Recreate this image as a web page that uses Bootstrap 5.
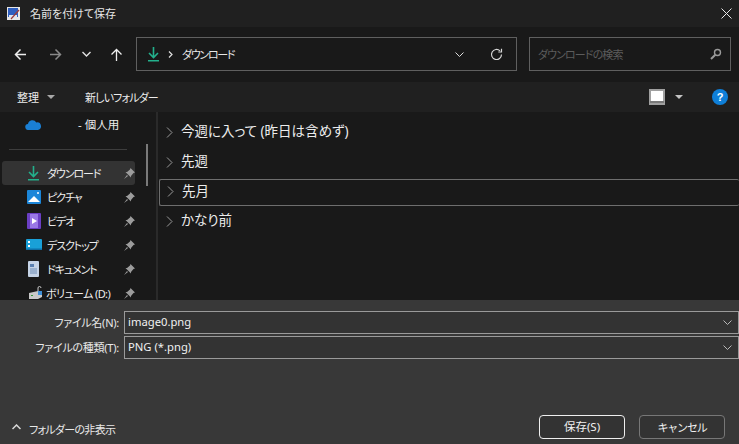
<!DOCTYPE html>
<html lang="ja">
<head>
<meta charset="utf-8">
<title>名前を付けて保存</title>
<link href="https://cdn.jsdelivr.net/npm/bootstrap@5.3.0/dist/css/bootstrap.min.css" rel="stylesheet">
<style>
html,body{height:444px;overflow:hidden;background:#383838}
body{font-family:"Noto Sans","Noto Sans CJK JP",sans-serif;color:#f2f2f2;font-size:12px;line-height:1;font-feature-settings:"palt"}
.win{width:739px;height:444px}
.titlebar{height:27px;background:#202020;padding-left:7px;font-size:11px}
.titlebar .ttl{margin-left:10px;color:#e8e8e8}
.closex{margin-left:auto;margin-right:7px}
.navrow{height:55px;background:#191919;padding:10px 9px 0 0;align-items:flex-start}
.navbtns{width:136px;height:34px;flex:none}
.addr{width:381px;height:34px;border:1px solid #5f5f5f;flex:none;padding-left:10px}
.addr .crumb{margin-left:9px;color:#e6e6e6;font-size:11px;letter-spacing:-1.3px}
.srch{width:202px;height:34px;border:1px solid #5f5f5f;margin-left:12px;flex:none;padding:0 8px;color:#5c5c5c;font-size:11px;letter-spacing:-.9px}
.cmdrow{height:30px;background:#202020;padding-left:17px;font-size:11px;color:#ececec}
.cmdrow .newf{margin-left:30px;letter-spacing:-.85px}
.cmdright{margin-left:auto;padding-right:11px}
.body-area{height:188px;background:#191919}
.sidebar{width:158px;flex:none;overflow:hidden;position:relative;border-right:2px solid #2a2a2a}
.sbar{position:absolute;left:146px;top:32px;width:2px;height:42px;background:#7a7a7a}
.srow{height:24px;margin:0 21px 0 2px;padding-left:25px;border-radius:3px;font-size:11px;flex:none;color:#ededed}
.srow .lbl{margin-left:7px;white-space:nowrap;letter-spacing:-1.1px}
.srow .pin{margin-left:auto;margin-right:0}
.srow.sel{background:#333}
.sepline{height:1px;flex:none;background:#3d3d3d;margin:10px 29px 11px 9px}
.onerow{height:27px;flex:none;padding:0 0 2px 25px;font-size:11.5px;color:#ededed}
.onerow .lbl{margin-left:37px}
.files{flex:1;min-width:0;padding-top:5px}
.grp{height:30px;padding-left:8px;font-size:13.5px;color:#ececec}
.grp .gname{margin-left:8px}
.grp.foc{border:1px solid #6e6e6e;border-right:0;border-radius:2px;height:27px;margin:2px 0 0 1px;padding:0 0 2px 7px}
.bottom{height:144px;background:#383838;padding-top:11px;position:relative}
.frow{height:22px;margin-bottom:3px;font-size:11px}
.frow label{width:119px;text-align:right;color:#e8e8e8;margin:0;letter-spacing:-.25px}
.fbox{margin-left:5px;width:615px;flex:none;height:23px;border:1px solid #9a9a9a;padding:0 3px;background:#333;color:#f0f0f0;font-size:11.25px}
.fbox svg{margin-left:auto;margin-right:3px}
.footrow{margin-top:57px;height:24px;padding-left:12px;padding-right:14px;font-size:11px;color:#e8e8e8}
.footrow .hide{margin-left:8px;margin-top:9px;letter-spacing:-.7px}
.foldup{margin-top:9px}
.dlgbtn{width:86px;height:24px;padding:0;border-radius:4px;background:#333;border:1px solid #777;color:#f0f0f0;font-size:11.5px;line-height:1}
.dlgbtn.kn{font-size:11px;letter-spacing:-1.2px}
.dlgbtn.pri{border:1px solid #efefef;margin-left:auto;margin-right:14px}
.dlgbtn:hover{background:#333;color:#f0f0f0}
</style>
</head>
<body>
<div class="win d-flex flex-column">
  <div class="titlebar d-flex align-items-center">
    <svg width="13" height="13" viewBox="0 0 13 13"><rect width="13" height="13" fill="#e8e8e8"/><rect x="1" y="1" width="10" height="9" fill="#2f5fc0"/><rect x="2" y="8" width="8" height="3" fill="#dfe6f2"/><path d="M4 12 12 3" stroke="#9c3a3a" stroke-width="1.2"/></svg>
    <span class="ttl">名前を付けて保存</span>
    <svg class="closex" width="11" height="11" viewBox="0 0 11 11"><path d="M.5.5l10 10M10.500.5l-10 10" stroke="#e8e8e8" stroke-width="1"/></svg>
  </div>
  <div class="navrow d-flex">
    <div class="navbtns d-flex align-items-center">
      <svg style="margin-left:14px" width="13" height="13" viewBox="0 0 13 13"><path d="M12 6.500H1.500M6.500 1.500l-5 5 5 5" fill="none" stroke="#eee" stroke-width="1.5"/></svg>
      <svg style="margin-left:22px" width="13" height="13" viewBox="0 0 13 13"><path d="M1 6.500h10.500M6.500 1.500l5 5-5 5" fill="none" stroke="#8a8a8a" stroke-width="1.5"/></svg>
      <svg style="margin-left:20px" width="9" height="6" viewBox="0 0 9 6"><path d="M.5 1l4 4 4-4" fill="none" stroke="#e0e0e0" stroke-width="1.4"/></svg>
      <svg style="margin-left:19px" width="13" height="13" viewBox="0 0 13 13"><path d="M6.500 13V1.500M1.500 6.500l5-5 5 5" fill="none" stroke="#eee" stroke-width="1.3"/></svg>
    </div>
    <div class="addr d-flex align-items-center">
      <svg width="13" height="15" viewBox="0 0 13 15"><path d="M6.500 0v10M2 6l4.500 4.500L11 6" fill="none" stroke="#23b08c" stroke-width="1.6"/><rect x="1" y="13" width="11" height="1.500" fill="#23b08c"/></svg>
      <svg class="ms-2" width="5" height="7" viewBox="0 0 5 7"><path d="M1 .5l3 3-3 3" fill="none" stroke="#e0e0e0" stroke-width="1.2"/></svg>
      <span class="crumb">ダウンロード</span>
      <svg style="margin-left:auto;margin-right:26px" width="9" height="5" viewBox="0 0 9 5"><path d="M.5.500l4 4 4-4" fill="none" stroke="#dcdcdc" stroke-width="1"/></svg>
      <svg style="margin-right:13px" width="13" height="13" viewBox="0 0 13 13"><path d="M11.500 6.500a5 5 0 1 1-1.500-3.600" fill="none" stroke="#d8d8d8" stroke-width="1.200"/><path d="M11.500.8v3.200H8.300" fill="none" stroke="#d8d8d8" stroke-width="1.200"/></svg>
    </div>
    <div class="srch d-flex align-items-center justify-content-between">
      <span>ダウンロードの検索</span>
      <svg width="12" height="12" viewBox="0 0 12 12"><circle cx="7.500" cy="4.500" r="3" fill="none" stroke="#9a9a9a" stroke-width="1.400"/><path d="M5.300 6.700 1 11" stroke="#9a9a9a" stroke-width="2"/></svg>
    </div>
  </div>
  <div class="cmdrow d-flex align-items-center">
    <span>整理</span>
    <svg class="ms-2" width="8" height="4" viewBox="0 0 8 4"><path d="M0 0h8L4 4z" fill="#a8a8a8"/></svg>
    <span class="newf">新しいフォルダー</span>
    <div class="cmdright d-flex align-items-center">
      <svg width="16" height="16" viewBox="0 0 16 16"><rect width="16" height="16" fill="#a0a0a0"/><rect x="2" y="2" width="12" height="10" fill="#fff"/><rect x="1" y="12.500" width="14" height="1" fill="#555"/></svg>
      <svg style="margin-left:10px;margin-right:29px" width="8" height="4" viewBox="0 0 8 4"><path d="M0 0h8L4 4z" fill="#c4c4c4"/></svg>
      <svg width="16" height="16" viewBox="0 0 16 16"><circle cx="8" cy="8" r="8" fill="#0f7fd8"/><text x="8" y="12" text-anchor="middle" font-family="Liberation Sans" font-weight="700" font-size="11" fill="#fff">?</text></svg>
    </div>
  </div>
  <div class="body-area d-flex">
    <div class="sidebar d-flex flex-column">
      <div class="onerow d-flex align-items-center">
        <svg width="16" height="10" viewBox="0 0 16 10"><path d="M3.500 10a3 3 0 0 1-.5-6 4.500 4.500 0 0 1 8.300-1.500A3.500 3.500 0 0 1 13 10z" fill="#1a7fd4"/></svg>
        <span class="lbl">- 個人用</span>
      </div>
      <div class="sepline"></div>
      <div class="sbar"></div>
      <div class="srow sel d-flex align-items-center">
        <svg width="13" height="15" viewBox="0 0 13 15"><path d="M6.500 0v10M2 6l4.500 4.500L11 6" fill="none" stroke="#23b08c" stroke-width="1.600"/><rect x="1" y="13" width="11" height="1.500" fill="#23b08c"/></svg>
        <span class="lbl">ダウンロード</span>
        <svg class="pin" width="11" height="11" viewBox="0 0 11 11"><path d="M6.500 0 11 4.500 9.500 5 7 8 7 9.500 1.500 4 3 4l3-2.500zM3 7 0 11l4-3z" fill="#9c9c9c"/></svg>
      </div>
      <div class="srow d-flex align-items-center">
        <svg width="14" height="14" viewBox="0 0 14 14"><rect width="14" height="14" rx="1" fill="#1b86d9"/><path d="M1 12l6-6 6 6z" fill="#fff"/><circle cx="11" cy="3" r="1" fill="#fff"/></svg>
        <span class="lbl" style="margin-left:6px">ピクチャ</span>
        <svg class="pin" width="11" height="11" viewBox="0 0 11 11"><path d="M6.500 0 11 4.500 9.500 5 7 8 7 9.500 1.500 4 3 4l3-2.500zM3 7 0 11l4-3z" fill="#9c9c9c"/></svg>
      </div>
      <div class="srow d-flex align-items-center">
        <svg width="14" height="16" viewBox="0 0 14 16"><rect width="14" height="16" rx="1" fill="#6b3fc4"/><rect x="3" y="1" width="8" height="14" fill="#9a78e6"/><path d="M5 5l5 3-5 3z" fill="#fff"/></svg>
        <span class="lbl" style="margin-left:6px">ビデオ</span>
        <svg class="pin" width="11" height="11" viewBox="0 0 11 11"><path d="M6.500 0 11 4.500 9.500 5 7 8 7 9.500 1.500 4 3 4l3-2.500zM3 7 0 11l4-3z" fill="#9c9c9c"/></svg>
      </div>
      <div class="srow d-flex align-items-center">
        <svg style="margin-left:-1px" width="16" height="12" viewBox="0 0 16 12"><rect width="16" height="11" rx="1" fill="#19a0d8"/><rect x="2" y="2" width="2" height="2" fill="#fff"/><rect x="2" y="6" width="2" height="2" fill="#fff"/><rect y="9.500" width="16" height="1.500" fill="#0d6fa8"/></svg>
        <span class="lbl" style="margin-left:5px">デスクトップ</span>
        <svg class="pin" width="11" height="11" viewBox="0 0 11 11"><path d="M6.500 0 11 4.500 9.500 5 7 8 7 9.500 1.500 4 3 4l3-2.500zM3 7 0 11l4-3z" fill="#9c9c9c"/></svg>
      </div>
      <div class="srow d-flex align-items-center">
        <svg width="13" height="16" viewBox="0 0 13 16"><rect x="1" width="11" height="16" rx="1" fill="#c5d3e6"/><rect x="3" y="3" width="4" height="3" fill="#5a7fb0"/><path d="M3 8h7M3 10h7M3 12h7" stroke="#6f8db5"/></svg>
        <span class="lbl">ドキュメント</span>
        <svg class="pin" width="11" height="11" viewBox="0 0 11 11"><path d="M6.500 0 11 4.500 9.500 5 7 8 7 9.500 1.500 4 3 4l3-2.500zM3 7 0 11l4-3z" fill="#9c9c9c"/></svg>
      </div>
      <div class="srow d-flex align-items-center">
        <svg style="margin-left:1px" width="15" height="14" viewBox="0 0 15 14"><path d="M1 7l9-2 4 1v5l-4 2H1z" fill="#c8c8c8"/><rect x="3" y="9" width="2" height="1" fill="#3a9a3a"/><path d="M10 5V2a1.500 1.500 0 0 1 3 0" fill="none" stroke="#c8c8c8"/><rect x="10" y="5" width="4" height="4" fill="#3d8fd8"/></svg>
        <span class="lbl" style="margin-left:3px;letter-spacing:-.6px">ボリューム (D:)</span>
        <svg class="pin" width="11" height="11" viewBox="0 0 11 11"><path d="M6.500 0 11 4.500 9.500 5 7 8 7 9.500 1.500 4 3 4l3-2.500zM3 7 0 11l4-3z" fill="#9c9c9c"/></svg>
      </div>
    </div>
    <div class="files">
      <div class="grp d-flex align-items-center"><svg width="7" height="11" viewBox="0 0 7 11"><path d="M1 .5l5 5-5 5" fill="none" stroke="#9a9a9a"/></svg><span class="gname">今週に入って (昨日は含めず)</span></div>
      <div class="grp d-flex align-items-center"><svg width="7" height="11" viewBox="0 0 7 11"><path d="M1 .5l5 5-5 5" fill="none" stroke="#9a9a9a"/></svg><span class="gname">先週</span></div>
      <div class="grp foc d-flex align-items-center"><svg width="7" height="11" viewBox="0 0 7 11"><path d="M1 .5l5 5-5 5" fill="none" stroke="#9a9a9a"/></svg><span class="gname">先月</span></div>
      <div class="grp d-flex align-items-center"><svg width="7" height="11" viewBox="0 0 7 11"><path d="M1 .5l5 5-5 5" fill="none" stroke="#9a9a9a"/></svg><span class="gname">かなり前</span></div>
    </div>
  </div>
  <div class="bottom">
    <div class="frow d-flex align-items-center">
      <label>ファイル名(N):</label>
      <div class="fbox d-flex align-items-center"><span>image0.png</span><svg width="9" height="5" viewBox="0 0 9 5"><path d="M.5.500l4 4 4-4" fill="none" stroke="#b8b8b8"/></svg></div>
    </div>
    <div class="frow d-flex align-items-center">
      <label>ファイルの種類(T):</label>
      <div class="fbox d-flex align-items-center"><span>PNG (*.png)</span><svg width="9" height="5" viewBox="0 0 9 5"><path d="M.5.500l4 4 4-4" fill="none" stroke="#b8b8b8"/></svg></div>
    </div>
    <div class="footrow d-flex align-items-start">
      <svg class="foldup" width="9" height="6" viewBox="0 0 9 6"><path d="M.5 5l4-4 4 4" fill="none" stroke="#d8d8d8" stroke-width="1.500"/></svg>
      <span class="hide">フォルダーの非表示</span>
      <button type="button" class="btn dlgbtn pri">保存(S)</button>
      <button type="button" class="btn dlgbtn kn">キャンセル</button>
    </div>
  </div>
</div>
</body>
</html>
